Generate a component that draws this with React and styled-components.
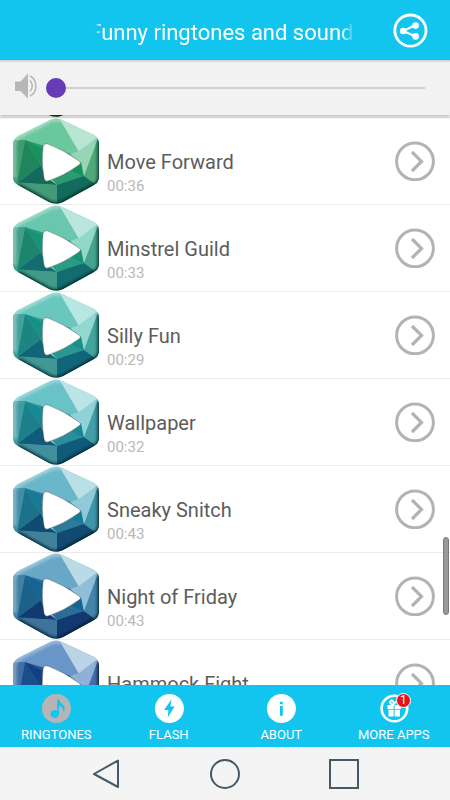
import { useLayoutEffect, useRef, useState } from "react";
import styled, { createGlobalStyle } from "styled-components";

const GlobalStyle = createGlobalStyle`
  * {
    box-sizing: border-box;
  }
  body {
    margin: 0;
    background: #fff;
    font-family: Roboto, "Liberation Sans", sans-serif;
  }
  button {
    padding: 0;
    border: none;
    background: none;
    font: inherit;
    color: inherit;
    cursor: pointer;
  }
  svg {
    display: block;
  }
`;

const Screen = styled.div`
  display: flex;
  flex-direction: column;
  height: 100vh;
  overflow: hidden;
`;

// Header
const Header = styled.header`
  flex: none;
  display: grid;
  grid-template-columns: 95px 1fr 95px;
  align-items: center;
  height: 60px;
  background: #12c5ef;
  color: #fff;
`;

const Marquee = styled.h1`
  grid-column: 2;
  display: flex;
  justify-content: center;
  margin: 0;
  padding: 5px 0 0 4px;
  overflow: hidden;
  white-space: nowrap;
  font-size: 22px;
  line-height: 28px;
  font-weight: 400;
  mask-image: linear-gradient(
    to right,
    transparent,
    #000 6px,
    #000 calc(100% - 14px),
    transparent
  );
`;

const ShareButton = styled.button`
  justify-self: end;
  margin-right: 22px;
`;

// Volume
const VolumeBar = styled.label`
  flex: none;
  position: relative;
  z-index: 1;
  display: flex;
  align-items: center;
  gap: 9px;
  height: 55px;
  padding: 0 15px;
  background: linear-gradient(#d0c9c9, #f2f2f2 3px);
  box-shadow: 0 2px 3px rgba(0, 0, 0, 0.25);
`;

const VolumeSlider = styled.input`
  flex: 1;
  min-width: 0;
  height: 20px;
  margin: 0;
  appearance: none;
  background: linear-gradient(#d0d0d0, #d0d0d0) center / calc(100% - 20px) 2px
    no-repeat;
  &::-webkit-slider-thumb {
    appearance: none;
    width: 20px;
    height: 20px;
    border-radius: 50%;
    background: #673ab7;
  }
`;

// List
const ListArea = styled.main`
  position: relative;
  flex: 1;
  min-height: 0;
`;

const List = styled.ul`
  height: 100%;
  margin: 0;
  padding: 0;
  list-style: none;
  overflow-y: auto;
  scrollbar-width: none;
`;

const Row = styled.li`
  display: flex;
  align-items: center;
  gap: 8px;
  height: 87px;
  padding: 0 15px 0 13px;
  border-bottom: 1px solid #ebebeb;
`;

const RowText = styled.div`
  flex: 1;
  align-self: flex-start;
  min-width: 0;
  padding-top: 32px;
`;

const RowTitle = styled.div`
  font-size: 20px;
  line-height: 24px;
  color: #5c5c5c;
  white-space: nowrap;
`;

const RowTime = styled.div`
  font-size: 15px;
  line-height: 24px;
  color: #b8b8b8;
`;

const ScrollThumb = styled.div`
  position: absolute;
  top: 74%;
  right: 1px;
  width: 6px;
  height: 78px;
  border: 1px solid #7a7a7a;
  border-radius: 3px;
  background: #999;
`;

// Bottom bars
const Tabs = styled.nav`
  flex: none;
  display: grid;
  grid-template-columns: repeat(4, 1fr);
  height: 62px;
  background: #12c5ef;
`;

const Tab = styled.button`
  display: flex;
  flex-direction: column;
  align-items: center;
  gap: 4px;
  padding-top: 8px;
  color: ${({ $active }) => ($active ? "#b5b5b5" : "#fff")};
`;

const TabLabel = styled.span`
  font-size: 13px;
  line-height: 16px;
  color: #fff;
`;

const SystemBar = styled.nav`
  flex: none;
  display: flex;
  justify-content: center;
  align-items: center;
  gap: 89px;
  height: 53px;
  background: #f4f4f4;
  color: #455a64;
`;

const HEXAGON =
  "M37 2 Q43 -1 49 2 L81 17 Q86 20 86 26 V59 Q86 64 81 67 L50 84 Q43 87 36 84 L5 67 Q0 64 0 59 V27 Q0 21 5 18 Z";

const Gem = ({ id, colors }) => {
  const [top, pale, right, edge, left, inner, rim, deep, base, mid] = colors;
  return (
    <svg width="86" height="86" viewBox="0 0 86 86" aria-hidden="true">
      <defs>
        <clipPath id={`clip-${id}`}>
          <path d={HEXAGON} />
        </clipPath>
        <filter id={`soft-${id}`} x="-20%" y="-20%" width="140%" height="140%">
          <feGaussianBlur stdDeviation="1.6" />
        </filter>
      </defs>
      <g clipPath={`url(#clip-${id})`}>
        <rect width="86" height="86" fill={top} />
        <path d="M12 22 L62 34 L70 60 L44 67 L28 47 Z" fill={mid} />
        <path d="M12 22 L46 0 L66 34 L58 36 Z" fill={top} />
        <path d="M46 0 H86 V19 L66 34 Z" fill={pale} />
        <path d="M66 33 L86 18 L71 59 L67 44 Z" fill={right} />
        <path d="M86 18 V67 L82 66 L71 58 Z" fill={edge} />
        <path d="M66 33 L68 45 L57 36 Z" fill={right} />
        <path d="M0 22 L12 22 L4 65 L0 64 Z" fill={rim} />
        <path d="M12 22 L28 47 L4 65 Z" fill={left} />
        <path d="M12 22 L32 32 V50 L28 47 Z" fill={inner} />
        <path d="M4 65 L28 47 L34 60 L44 67 Z" fill={deep} />
        <path d="M58 52 L68 44 L71 59 Z" fill={inner} />
        <path d="M44 67 L71 58 L82 66 L62 86 H43 Z" fill={deep} />
        <path d="M0 64 L44 67 V86 H0 Z" fill={base} />
        <path
          d="M1 60 V27 Q1 21 6 18 L38 2 Q43 0 48 2"
          fill="none"
          stroke="#fff"
          strokeWidth="5"
          opacity="0.35"
          filter={`url(#soft-${id})`}
        />
        <path
          d="M87 22 V59 Q87 65 81 68 L50 85 Q43 88 36 85 L5 68"
          fill="none"
          stroke={`color-mix(in srgb, ${deep} 35%, #000)`}
          strokeWidth="5"
          opacity="0.85"
          filter={`url(#soft-${id})`}
        />
      </g>
      <path
        d="M30 29 Q31 25 35 26 Q51 32 66 43 Q69 45 66 47 Q51 58 35 63 Q32 64 31 60 Q28 44 30 29 Z"
        fill="#fff"
        stroke="#000"
        strokeOpacity="0.35"
        strokeWidth="0.8"
      />
    </svg>
  );
};

const ArrowIcon = () => (
  <svg width="40" height="40" viewBox="0 0 40 40" fill="none" stroke="#b3b3b3">
    <circle cx="20" cy="20.4" r="18.4" strokeWidth="3" />
    <path d="M17 11 L26.5 20.4 L17 30" strokeWidth="3.2" />
  </svg>
);

const ShareIcon = () => (
  <svg width="36" height="36" viewBox="0 0 36 36" fill="#fff" stroke="#fff">
    <circle cx="18.4" cy="18.6" r="15.6" fill="none" strokeWidth="2.8" />
    <path d="M23.6 13 L11.2 19 L23.6 24.5" fill="none" strokeWidth="2" />
    <g stroke="none">
      <circle cx="11.2" cy="19" r="3.3" />
      <circle cx="23.6" cy="13.6" r="3.3" />
      <circle cx="23.6" cy="24.4" r="3.3" />
    </g>
  </svg>
);

const SpeakerIcon = () => (
  <svg width="22" height="30" viewBox="0 0 22 30" fill="#b7b7b7">
    <path d="M0 8.6 H5.5 L13 0.6 V25.6 L5.5 18 H0 Z" />
    <g fill="none" stroke="#b7b7b7" strokeWidth="1.5">
      <path d="M15 7.5 Q19.5 13 15 18.5" />
      <path d="M15 3 C22.8 6.5 22.8 19.5 15 23" />
    </g>
  </svg>
);

const TabIcon = ({ children }) => (
  <svg width="30" height="30" viewBox="0 0 30 30" aria-hidden="true">
    {children}
  </svg>
);

const NoteIcon = () => (
  <TabIcon>
    <circle cx="15.4" cy="15.5" r="14.5" fill="currentColor" />
    <path
      d="M16.2 6.5 H18 Q18.4 9 21 11 Q25.6 14.5 22.4 19.5 Q22.8 14 18 13 V21 A4.3 3.9 0 1 1 16.2 17.8 Z"
      fill="#12c5ef"
    />
  </TabIcon>
);

const FlashIcon = () => (
  <TabIcon>
    <circle cx="15.4" cy="15.5" r="14.5" fill="currentColor" />
    <path d="M17.4 6.5 L10 17 H14.4 L13.8 24.5 L20.6 13.5 H16.4 Z" fill="#12c5ef" />
  </TabIcon>
);

const InfoIcon = () => (
  <TabIcon>
    <circle cx="15.4" cy="15.5" r="14.5" fill="currentColor" />
    <rect x="14" y="8.8" width="2.8" height="2.4" fill="#12c5ef" />
    <rect x="14" y="12.8" width="2.8" height="10" fill="#12c5ef" />
  </TabIcon>
);

const GiftIcon = () => (
  <TabIcon>
    <circle cx="15.4" cy="15.5" r="12.8" fill="none" stroke="#fff" strokeWidth="2.6" />
    <path d="M8.5 12 H14.6 V16 H8.5 Z M15.6 12 H22 V16 H15.6 Z" fill="#fff" />
    <path d="M9.5 16.8 H14.6 V23.5 H9.5 Z M15.6 16.8 H21 V23.5 H15.6 Z" fill="#fff" />
    <path
      d="M15 12 L11.6 10.6 Q10.4 8.6 12.4 7.4 Q14.6 7.4 15 11.5 Q16.5 8 19 8"
      fill="none"
      stroke="#fff"
      strokeWidth="1.7"
    />
  </TabIcon>
);

const IconHolder = styled.span`
  position: relative;
`;

const Badge = styled.span`
  position: absolute;
  top: 0;
  right: -2px;
  width: 15px;
  height: 15px;
  border: 1px solid #fff;
  border-radius: 50%;
  background: #e3151a;
  color: #fff;
  font-size: 12px;
  line-height: 13px;
  text-align: center;
`;

// top, pale, right, edge, left, inner, rim, deep, base, mid
const sounds = [
  {
    colors: ["#4fb37f", "#a8dcc0", "#70c599", "#2f9360", "#0b6b3d", "#188552", "#2f9862", "#045232", "#1c7c50", "#1a8252"],
  },
  {
    name: "Move Forward",
    time: "00:36",
    colors: ["#6bc79c", "#b9e6d2", "#96d6b5", "#4fa87a", "#1f855b", "#17925f", "#3c9e70", "#126b5c", "#429b76", "#2d9a72"],
  },
  {
    name: "Minstrel Guild",
    time: "00:33",
    colors: ["#69c7ae", "#bae6de", "#92d8c5", "#46a48c", "#1d856e", "#179478", "#3fa18a", "#126c70", "#419b88", "#2b9b84"],
  },
  {
    name: "Silly Fun",
    time: "00:29",
    colors: ["#69c7bd", "#b9e6e3", "#92d7d0", "#43a39d", "#1c8580", "#169189", "#41a29d", "#11657a", "#409793", "#2c9692"],
  },
  {
    name: "Wallpaper",
    time: "00:32",
    colors: ["#69c3c6", "#bae4e6", "#90d2d7", "#439ea7", "#1c7f89", "#168993", "#419ba5", "#105a7a", "#40909b", "#2c8e9b"],
  },
  {
    name: "Sneaky Snitch",
    time: "00:43",
    colors: ["#69b7c9", "#bae0e6", "#90c9d7", "#4195a9", "#1b728a", "#157b96", "#408fa6", "#114b72", "#40829c", "#2b7b99"],
  },
  {
    name: "Night of Friday",
    time: "00:43",
    colors: ["#69a7c7", "#badae5", "#90bed7", "#4285a9", "#1c618a", "#166494", "#4080a6", "#123a70", "#40739b", "#2b6c98"],
  },
  {
    name: "Hammock Fight",
    colors: ["#6995c8", "#bad3e5", "#90b0d8", "#426fa9", "#1c4c8a", "#153f84", "#406fa6", "#122e70", "#40609b", "#2b5498"],
  },
];

const tabs = [
  { label: "RINGTONES", Icon: NoteIcon },
  { label: "FLASH", Icon: FlashIcon },
  { label: "ABOUT", Icon: InfoIcon },
  { label: "MORE APPS", Icon: GiftIcon, badge: 1 },
];

const SoundRow = ({ id, name, time, colors }) => (
  <Row>
    <button type="button" aria-label={name}>
      <Gem id={id} colors={colors} />
    </button>
    <RowText>
      {name && <RowTitle>{name}</RowTitle>}
      {time && <RowTime>{time}</RowTime>}
    </RowText>
    <button type="button" aria-label={name}>
      <ArrowIcon />
    </button>
  </Row>
);

const App = () => {
  const listRef = useRef(null);
  const [volume, setVolume] = useState(0);
  const [activeTab, setActiveTab] = useState("RINGTONES");

  // open the list a little below its first row
  useLayoutEffect(() => {
    listRef.current.scrollTop = 84;
  }, []);

  return (
    <Screen>
      <GlobalStyle />
      <Header>
        <Marquee>Funny ringtones and sounds</Marquee>
        <ShareButton type="button" aria-label="Share">
          <ShareIcon />
        </ShareButton>
      </Header>
      <VolumeBar>
        <SpeakerIcon />
        <VolumeSlider
          type="range"
          aria-label="Volume"
          value={volume}
          onChange={(e) => setVolume(Number(e.target.value))}
        />
      </VolumeBar>
      <ListArea>
        <List ref={listRef}>
          {sounds.map((sound, i) => (
            <SoundRow key={i} id={i} {...sound} />
          ))}
        </List>
        <ScrollThumb />
      </ListArea>
      <Tabs>
        {tabs.map(({ label, Icon, badge }) => (
          <Tab
            key={label}
            type="button"
            $active={label === activeTab}
            onClick={() => setActiveTab(label)}
          >
            <IconHolder>
              <Icon />
              {badge && <Badge>{badge}</Badge>}
            </IconHolder>
            <TabLabel>{label}</TabLabel>
          </Tab>
        ))}
      </Tabs>
      <SystemBar>
        <button type="button" aria-label="Back">
          <svg width="30" height="30" viewBox="0 0 30 30" fill="none" stroke="currentColor" strokeWidth="2">
            <path d="M27 1.500 V28 L3 15 Z" strokeLinejoin="round" />
          </svg>
        </button>
        <button type="button" aria-label="Home">
          <svg width="30" height="30" viewBox="0 0 30 30" fill="none" stroke="currentColor" strokeWidth="2">
            <circle cx="15" cy="15" r="14" />
          </svg>
        </button>
        <button type="button" aria-label="Recent">
          <svg width="30" height="30" viewBox="0 0 30 30" fill="none" stroke="currentColor" strokeWidth="2">
            <rect x="1" y="1" width="28" height="28" />
          </svg>
        </button>
      </SystemBar>
    </Screen>
  );
};

export default App;
